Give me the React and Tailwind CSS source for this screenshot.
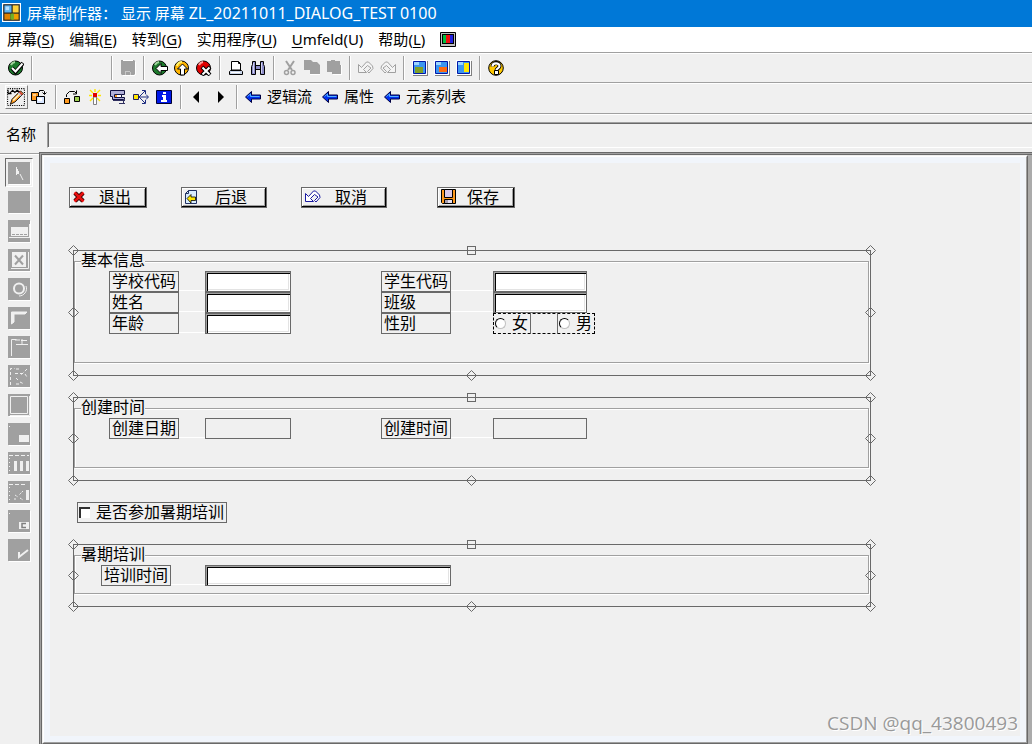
import React, { useState } from 'react';

const Icon = ({ children, className = 'w-4 h-4' }) => (
  <svg viewBox="0 0 16 16" className={`${className} shrink-0 block`} aria-hidden="true">
    {children}
  </svg>
);

const icons = {
  check: (
    <Icon>
      <circle cx="7.5" cy="8" r="7" fill="#1d7a2c" stroke="#000" />
      <path d="M3 5a5 5 0 0 1 4-3" stroke="#9fd49b" strokeWidth="2" fill="none" />
      <path d="M4 8l3.5 4L15 3" stroke="#000" strokeWidth="4" fill="none" />
      <path d="M4 8l3.5 3.5L14.5 3.5" stroke="#fff" strokeWidth="2" fill="none" />
    </Icon>
  ),
  save: (
    <Icon>
      <path d="M1 0h13l1 1v13l-1 1H2l-1-1z" fill="#a0a0a0" />
      <path d="M3 .5h10M15.5 2v13M3 15.500h12" stroke="#fff" fill="none" />
      <path d="M5.500 15v-4M6 11.500h4M10.500 12v3" stroke="#c8c8c8" fill="none" />
    </Icon>
  ),
  back: (
    <Icon>
      <circle cx="7.500" cy="8" r="7" fill="#1d7a2c" stroke="#000" />
      <path d="M3 5a5 5 0 0 1 4-3" stroke="#9fd49b" strokeWidth="2" fill="none" />
      <path d="M4 8.500l5-5v3h6.500v4H9v3z" fill="#fff" stroke="#000" />
    </Icon>
  ),
  up: (
    <Icon>
      <circle cx="7.500" cy="8" r="7" fill="#ffb400" stroke="#000" />
      <path d="M3 6a5 5 0 0 1 5-4" stroke="#fff36b" strokeWidth="2" fill="none" />
      <path d="M8.500 4l5 5h-3v6h-4V9h-3z" fill="#fff" stroke="#000" />
    </Icon>
  ),
  exit: (
    <Icon>
      <circle cx="7.500" cy="8" r="7" fill="#e00000" stroke="#000" />
      <path d="M3 5a5 5 0 0 1 4-3" stroke="#ff9a9a" strokeWidth="2" fill="none" />
      <path d="M6 7l8 8M14 7l-8 8" stroke="#000" strokeWidth="4" />
      <path d="M6.500 7.500l7 7M13.500 7.500l-7 7" stroke="#fff" strokeWidth="2" />
    </Icon>
  ),
  print: (
    <Icon>
      <path d="M3.500 1.500h7l2 2V10h-9z" fill="#fff" stroke="#000" />
      <path d="M10.500 1.500v2h2" fill="none" stroke="#000" />
      <path d="M2.500 10.500h11l1 1v3h-13v-3z" fill="#c8d4e8" stroke="#000" />
      <path d="M3 12.500h9" stroke="#fff" />
    </Icon>
  ),
  find: (
    <Icon>
      <path d="M2.500 1.500h3v4h5v-4h3v3l1 2v8h-4v-5h-5v5h-4v-8l1-2z" fill="#8c8cc8" stroke="#000" />
      <path d="M5.500 5v5M10.500 5v5" stroke="#000" />
      <path d="M3.500 3v10M11.500 3v10" stroke="#d0d0f0" />
    </Icon>
  ),
  cut: (
    <Icon>
      <path d="M4 1l6 9M12 1L6 10" stroke="#a0a0a0" strokeWidth="2" />
      <circle cx="4.500" cy="12.500" r="2" fill="none" stroke="#a0a0a0" strokeWidth="1.500" />
      <circle cx="11" cy="12.500" r="2" fill="none" stroke="#a0a0a0" strokeWidth="1.500" />
    </Icon>
  ),
  copy: (
    <Icon>
      <path d="M0 0h7l2 2h4l3 3v9H6v-4H0z" fill="#a0a0a0" />
      <path d="M6 14.500h10" stroke="#fff" />
    </Icon>
  ),
  paste: (
    <Icon>
      <path d="M1 1h4V0h4v1h5v4h1v9H6v-2H1z" fill="#a0a0a0" />
      <path d="M7 14.500h9M15.500 5v9" stroke="#fff" />
    </Icon>
  ),
  undo: (
    <Icon>
      <path
        d="M.500 4.500v8h8l-3-3 4-4 3.500 2.500-3.500 3.500 1.500 1.500 4-4.500-.500-2.500-4-4H8.500l-5 5.500z"
        fill="#f4f4f4"
        stroke="#a0a0a0"
      />
    </Icon>
  ),
  redo: (
    <Icon>
      <path
        d="M15.500 4.500v8h-8l3-3-4-4L3 8l3.500 3.500L5 13 1 8.500 1.500 6l4-4h2l5 5.500z"
        fill="#f4f4f4"
        stroke="#a0a0a0"
      />
    </Icon>
  ),
  session: (
    <Icon>
      <path d="M1 1h15v15H1z" fill="#808080" />
      <path d="M0 0h15v15H0z" fill="#fff" />
      <path d="M1.500 1.500h12v12h-12z" fill="#3c96f0" stroke="#0018a8" />
      <path d="M2 2h5v3H2z" fill="#9cd4ff" />
      <path d="M3 7h8v6H3z" fill="#7fa028" />
    </Icon>
  ),
  shortcut: (
    <Icon>
      <path d="M1 1h15v15H1z" fill="#808080" />
      <path d="M0 0h15v15H0z" fill="#fff" />
      <path d="M1.500 1.500h12v12h-12z" fill="#3c96f0" stroke="#0018a8" />
      <path d="M2 2h5v3H2z" fill="#9cd4ff" />
      <path d="M5 7h8v5H5z" fill="#ff6a10" />
    </Icon>
  ),
  layout: (
    <Icon>
      <path d="M1 1h15v15H1z" fill="#808080" />
      <path d="M0 0h15v15H0z" fill="#fff" />
      <path d="M1.500 1.500h12v12h-12z" fill="#3c96f0" stroke="#0018a8" />
      <path d="M2 2h5v3H2z" fill="#9cd4ff" />
      <path d="M8 3h5v9H8z" fill="#ffe600" />
    </Icon>
  ),
  help: (
    <Icon>
      <circle cx="8" cy="8" r="7.300" fill="#ffc800" stroke="#000" />
      <path d="M4.500 6.500C4.500 2 11.500 2 11.500 6c0 2.500-3 2.200-3 4.500" stroke="#000" strokeWidth="4" fill="none" />
      <path d="M6.500 10.500h4v4h-4z" fill="#fff" stroke="#000" />
      <path d="M4.500 6.500C4.500 2.500 11.500 2.500 11.500 6c0 2.500-3 2.200-3 4" stroke="#fff" strokeWidth="2.200" fill="none" />
    </Icon>
  ),
  edit: (
    <Icon className="w-[18px] h-[18px]">
      <path d="M.500 .500h15v15H.500z" fill="none" stroke="#000" strokeDasharray="1 1" />
      <path d="M1 2v3h3M2 5l3-3 2 2 2-2 3 2" stroke="#000" fill="none" />
      <path d="M3 14.500l1.500-4.500L12 2.500l2.500 2.500-7.500 7.500z" fill="#ff9a1f" stroke="#000" strokeWidth=".8" />
      <path d="M5.500 11l7-7" stroke="#fff2c0" strokeWidth="1.500" />
      <path d="M11 3.500l2.500 2.500" stroke="#d04040" strokeWidth="1.500" />
      <path d="M10 4.500l2.500 2.500" stroke="#b8d0f0" />
    </Icon>
  ),
  other: (
    <Icon>
      <path d="M.500 3.500h7v8h-7z" fill="#ff9a1f" stroke="#000" />
      <path d="M2 5h3v2H2z" fill="#ffd090" />
      <path d="M5.500 7.500h8v7h-8z" fill="#d8e6ff" stroke="#000" />
      <path d="M7 9h4v3H7z" fill="#fff" />
      <path d="M8.500 3v-1.500h4l1 1V5M11.500 3.500l2 2 2-2" stroke="#000" fill="none" />
    </Icon>
  ),
  activate: (
    <Icon>
      <path d="M.500 9.500h5v5h-5z" fill="#ff9a1f" stroke="#000" />
      <path d="M10.500 7.500h5v5h-5z" fill="#9ccc50" stroke="#000" />
      <path d="M2.500 8V5.500l3-3h5l2 2M12.500 1.500V5H9" stroke="#000" fill="none" />
    </Icon>
  ),
  wand: (
    <Icon>
      <path d="M8 0v3M3 1l3 3M13 1l-3 3M2 6.500h3M11 6.500h3M3 12l3-3M13 12l-3-3" stroke="#ffe600" strokeWidth="1.400" />
      <path d="M6.500 8h3v7.500h-3z" fill="#fff" stroke="#808080" />
      <path d="M6 4h4v4H6z" fill="#e00000" />
    </Icon>
  ),
  where: (
    <Icon>
      <path d="M.500 1.500h14v4h-3v3h3v2H2.500v-3h-2z" fill="#b0b0d8" stroke="#101040" />
      <path d="M4.500 5.500h7v3h-7z" fill="#fff" stroke="#101040" />
      <path d="M5 6h2v2H5z" fill="#ff9a1f" />
      <path d="M3 11.500h12M9 14.500h6M13.500 10v5" fill="none" stroke="#303060" />
    </Icon>
  ),
  hierarchy: (
    <Icon>
      <path d="M.500 5.500h5v5h-5z" fill="#ffe600" stroke="#202060" />
      <path d="M6 8h9M6 8l6-6M6 8l6 6M9 1.500h3.500V5M13 5.500L15.500 8 13 10.500M9 14.500h3.500V11" stroke="#1c2c80" fill="none" />
    </Icon>
  ),
  info: (
    <Icon>
      <path d="M.500 1.500h15v13H.500z" fill="#0018e8" stroke="#000030" />
      <path d="M7 3h3v2H7zM6 6h4v5h1v2H5v-2h2V8H6z" fill="#fff" />
    </Icon>
  ),
  prev: (
    <Icon>
      <path d="M4 8l6-6v12z" fill="#000" />
    </Icon>
  ),
  next: (
    <Icon>
      <path d="M12 8L6 2v12z" fill="#000" />
    </Icon>
  ),
  arrow: (
    <Icon>
      <path d="M.500 8L6.500 2.500V6H15.500v4h-9v3.500z" fill="#0030f0" stroke="#000040" />
      <path d="M2.500 7.500L5.500 5v2.500h9" fill="none" stroke="#50b0ff" />
    </Icon>
  ),
  cancel: (
    <Icon>
      <path d="M2 4l8 8M10 4l-8 8" stroke="#300" strokeWidth="4.500" />
      <path d="M1.500 3.500l9 9M10.500 3.500l-9 9" stroke="#e81010" strokeWidth="2.500" />
    </Icon>
  ),
  previous: (
    <Icon>
      <path d="M.500 4.500l3-3h8v13H.500z" fill="#d8ecff" stroke="#203060" />
      <path d="M.500 4.500h3v-3" fill="none" stroke="#203060" />
      <path d="M2 9.500l4-4V8h4.500v3.500H6V14z" fill="#ffe600" stroke="#000" strokeWidth=".8" />
    </Icon>
  ),
  revert: (
    <Icon>
      <path
        d="M.500 4.500v8h8l-3-3 4-4 3.500 2.500-3.500 3.500 1.500 1.500 4-4.500-.500-2.500-4-4H8.500l-5 5.500z"
        fill="#fff"
        stroke="#1818a0"
      />
    </Icon>
  ),
  disk: (
    <Icon>
      <path d="M.500 .500h14v14h-13l-1-1z" fill="#ff9a1f" stroke="#000" />
      <path d="M3.500 .500h8v8h-8z" fill="#d8c8e8" stroke="#000" />
      <path d="M3.500 10.500h8v4h-8z" fill="#e8e0f0" stroke="#000" />
      <path d="M4 11h3v3H4z" fill="#a8a0b0" />
    </Icon>
  ),
};

const palette = [
  { name: '选择', art: <path d="M8.500 5v8M9.500 7v5M10.500 9v3M12 12l3 6" /> },
  { name: '文本字段', art: null },
  {
    name: '输入/输出字段',
    art: (
      <>
        <path d="M3 7h17v9H3z" fill="#f0f0f0" stroke="none" />
        <path d="M4 14.500h16" stroke="#a0a0a0" strokeDasharray="3 1" />
        <path d="M1 17.500h21M21.500 4v14" />
      </>
    ),
  },
  {
    name: '复选框',
    art: (
      <>
        <path d="M4 3h14v15H4z" fill="#f0f0f0" stroke="none" />
        <path d="M7 6.500l8 9M15 6.500l-8 9" stroke="#a0a0a0" strokeWidth="2" />
        <path d="M3 19.500h17.500V3" />
      </>
    ),
  },
  {
    name: '单选按钮',
    art: (
      <>
        <circle cx="11" cy="10.500" r="5" strokeWidth="2" />
        <path d="M18 8c2 5-2 10-7 10" />
      </>
    ),
  },
  { name: '按钮', art: <path d="M3.500 17V5H19l-2 2H6v8z" fill="#f0f0f0" /> },
  { name: '标签条', art: <path d="M3.500 20V3.500h5M7 4h5M14 3v6M8 8.500h12M13 4.500h6" /> },
  {
    name: '标签条向导',
    art: <path d="M2.500 20V3.500h4M8 4h5M7 8.500h10M19 4l-7 7M8 13l2 2M8 19h3M12 17l4 2M17 9l2 3" strokeDasharray="3 2" />,
  },
  { name: '框', art: <path d="M2.500 2.500h17v17h-17zM21.500 2v19.500H2" /> },
  {
    name: '子屏幕区域',
    art: (
      <>
        <path d="M11 12h10v7H11z" fill="#f0f0f0" stroke="none" />
        <path d="M1 3.500h1" />
      </>
    ),
  },
  {
    name: '表控件',
    art: (
      <>
        <path d="M6 9h3v10H6zM12 9h3v10h-3zM18 9h3v10h-3z" fill="#f0f0f0" stroke="none" />
        <path d="M1 3.500h20" strokeDasharray="4 2" />
        <path d="M1.500 6v14" strokeDasharray="1 3" />
      </>
    ),
  },
  {
    name: '表控件向导',
    art: (
      <>
        <path d="M18 9h3v10h-3z" fill="#f0f0f0" stroke="none" />
        <path d="M1 3.500h16" strokeDasharray="4 2" />
        <path d="M1.500 6v14" strokeDasharray="1 3" />
        <path d="M15 10l-4 4M7 14l3 2M6 18h3M12 17l3 2" strokeDasharray="2 1" />
      </>
    ),
  },
  {
    name: '定制控件',
    art: (
      <>
        <path d="M11 12h10v7H11z" fill="#f0f0f0" stroke="none" />
        <path d="M18 13.500h-4v4h4" stroke="#808080" strokeWidth="1.500" />
        <path d="M1 3.500h1" />
      </>
    ),
  },
  { name: '状态图标', art: <path d="M11 13v5l9-7" strokeWidth="2" /> },
];

const Separator = () => <span className="mx-1 h-6 w-0.5 shrink-0 border-l border-[#a0a0a0] bg-white" />;

const ToolButton = ({ icon, label, wide, pressed }) => (
  <button
    title={label}
    aria-label={label}
    className={`flex h-6 shrink-0 items-center justify-center ${wide ? 'w-[23px] pr-px' : 'w-[22px]'} ${
      pressed ? 'border border-t-white border-l-white border-r-[#808080] border-b-[#808080]' : ''
    }`}
  >
    {icons[icon]}
  </button>
);

const LinkButton = ({ children }) => (
  <button className="flex h-6 shrink-0 items-center gap-1.5 pl-[3px] pr-[7px] text-[15px]">
    {icons.arrow}
    {children}
  </button>
);

const MenuItem = ({ text, hotkey, before = '(', after = ')' }) => (
  <button className="shrink-0 whitespace-nowrap">
    {text}
    {before}
    <span className="underline underline-offset-2">{hotkey}</span>
    {after}
  </button>
);

const FormButton = ({ icon, className, children }) => (
  <button className={`h-[21px] border border-[#696969] ${className}`}>
    <span className="flex h-[19px] items-center border-b border-r border-black bg-[#f0f0f0] pl-[3px] pr-1 text-base leading-[18px] shadow-[inset_1px_1px_0_#fff,inset_-1px_-1px_0_#a0a0a0]">
      {icons[icon]}
      <span className="flex-1 pt-px text-center">{children}</span>
    </span>
  </button>
);

const Handle = ({ className }) => (
  <svg viewBox="0 0 11 11" className={`absolute h-[11px] w-[11px] ${className}`} aria-hidden="true">
    <path d="M5.500 .500l5 5-5 5-5-5z" fill="none" stroke="#696969" />
  </svg>
);

// Selected group box: outer selection line with its handles, inner captioned frame
const Group = ({ title, className, children }) => (
  <div className="relative ml-1 w-full max-w-[798px] border border-[#696969] pb-3">
    <fieldset
      className={`mr-px min-w-0 border border-[#a0a0a0] px-1.5 shadow-[1px_1px_0_#fff,inset_1px_1px_0_#fff] ${className}`}
    >
      <legend className="relative h-5 bg-[#f0f0f0] text-base leading-5">{title}</legend>
      {children}
    </fieldset>
    <Handle className="-left-1.5 -top-1.5" />
    <Handle className="-right-1.5 -top-1.5" />
    <Handle className="-left-1.5 -bottom-1.5" />
    <Handle className="-right-1.5 -bottom-1.5" />
    <Handle className="-left-1.5 top-1/2 -translate-y-1.5" />
    <Handle className="-right-1.5 top-1/2 -translate-y-1.5" />
    <Handle className="-bottom-1.5 left-1/2 -translate-x-1.5" />
    <span className="absolute -top-[5px] left-1/2 h-[9px] w-[9px] -translate-x-[5px] border border-[#696969]" />
  </div>
);

const Label = ({ htmlFor, children }) => (
  <label
    htmlFor={htmlFor}
    className="block h-[21px] w-[70px] shrink-0 whitespace-nowrap border border-[#696969] pl-0.5 text-base leading-5"
  >
    {children}
  </label>
);

const Connector = ({ className }) => <span className={`mb-px h-px self-end bg-white ${className}`} />;

const Field = ({ id, disabled, className }) =>
  disabled ? (
    <input id={id} disabled className={`block h-[21px] border border-[#696969] ${className}`} />
  ) : (
    <span className={`block h-[21px] border border-[#696969] ${className}`}>
      <span className="block h-[19px] border-l border-t border-[#a0a0a0]">
        <input
          id={id}
          className="block h-[18px] w-full border-l border-t border-black bg-white px-1 text-sm shadow-[inset_-1px_-1px_0_#fff,inset_-2px_-2px_0_#e3e3e3] outline-none"
        />
      </span>
    </span>
  );

const Row = ({ left, right, gender, disabled }) => (
  <div className="ml-7 flex h-[21px]">
    <Label htmlFor={left.id}>{left.label}</Label>
    <Connector className="w-[26px]" />
    <Field id={left.id} disabled={disabled} className="w-[86px]" />
    <span className="w-[90px]" />
    <Label htmlFor={right.id}>{right.label}</Label>
    {gender ? <span className="w-[42px]" /> : <Connector className="w-[42px]" />}
    {gender || <Field id={right.id} disabled={disabled} className="w-[94px]" />}
  </div>
);

const Radio = ({ value, current, onChange, className }) => (
  <label className={`flex h-[19px] w-[37px] items-center gap-1.5 border-[#696969] pl-px text-base leading-5 ${className}`}>
    <input
      type="radio"
      name="gender"
      checked={current === value}
      onChange={() => onChange(value)}
      className="h-[11px] w-[11px] shrink-0 appearance-none rounded-full border border-b-[#c0c0c0] border-l-black border-r-[#c0c0c0] border-t-black bg-white checked:bg-black"
    />
    {value}
  </label>
);

const App = () => {
  const [gender, setGender] = useState('');
  const [training, setTraining] = useState(false);

  return (
    <div className="flex min-h-screen flex-col overflow-hidden bg-[#f0f0f0] font-['Liberation_Sans','Noto_Sans_CJK_SC',sans-serif] text-black">
      <header className="flex h-[27px] items-center gap-1.5 bg-[#0078d7] pb-0.5 pl-0.5 font-['Noto_Sans','Noto_Sans_CJK_SC',sans-serif] text-[15px] text-white">
        <Icon className="w-[19px] h-[19px]">
          <path d="M0 0h16v16H0z" fill="#fff" />
          <path d="M1 1h14v14H1z" fill="#202020" />
          <path d="M2 2h6v6H2z" fill="#5cb4f4" />
          <path d="M3 3h3v3H3z" fill="#b8e0ff" />
          <path d="M9 2h5v6H9z" fill="#ffd23c" />
          <path d="M8 9h6v5H8z" fill="#f0a000" />
          <path d="M2 9h5v5H2z" fill="#e08000" />
          <path d="M7 9h3v5H7z" fill="#6fae28" />
        </Icon>
        <h1 className="whitespace-pre">
          屏幕制作器： 显示 屏幕 <span className="text-base">ZL_20211011_DIALOG_TEST 0100</span>
        </h1>
      </header>

      <nav className="flex h-[25px] items-center gap-[15px] bg-white pl-[7px] font-['Noto_Sans','Noto_Sans_CJK_SC',sans-serif] text-[15px]">
        <MenuItem text="屏幕" hotkey="S" />
        <MenuItem text="编辑" hotkey="E" />
        <MenuItem text="转到" hotkey="G" />
        <MenuItem text="实用程序" hotkey="U" />
        <MenuItem text="" before="" hotkey="U" after="mfeld(U)" />
        <MenuItem text="帮助" hotkey="L" />
        <button aria-label="本地布局">
          <Icon>
            <path d="M.500 .500h15v14H.500z" fill="#c0c0c0" stroke="#000" />
            <path d="M2 2h12v10H2z" fill="#000" />
            <path d="M3 3h3v8H3z" fill="#00c040" />
            <path d="M6 3h4v8H6z" fill="#f01010" />
            <path d="M10 3h3v8h-3z" fill="#2020e0" />
          </Icon>
        </button>
      </nav>

      <div className="flex h-[30px] items-center border-t border-[#a0a0a0] pl-[5px] shadow-[inset_0_1px_0_#fff]">
        <ToolButton icon="check" label="回车" />
        <Separator />
        <input aria-label="命令" className="h-5 w-[70px] bg-transparent text-sm outline-none" />
        <Separator />
        <ToolButton icon="save" label="保存" />
        <Separator />
        <ToolButton icon="back" label="返回" />
        <ToolButton icon="up" label="退出" />
        <ToolButton icon="exit" label="取消" />
        <Separator />
        <ToolButton icon="print" label="打印" />
        <ToolButton icon="find" label="查找" />
        <Separator />
        <ToolButton icon="cut" label="剪切" />
        <ToolButton icon="copy" label="复制" />
        <ToolButton icon="paste" label="粘贴" />
        <Separator />
        <ToolButton icon="undo" label="撤销" />
        <ToolButton icon="redo" label="重做" />
        <Separator />
        <ToolButton icon="session" label="新建会话" />
        <ToolButton icon="shortcut" label="快捷方式" />
        <ToolButton icon="layout" label="定制布局" />
        <Separator />
        <ToolButton icon="help" label="帮助" />
      </div>

      <div className="flex h-[31px] items-center border-t border-[#a0a0a0] pb-0.5 pl-[5px] shadow-[inset_0_1px_0_#fff]">
        <ToolButton wide pressed icon="edit" label="显示/更改" />
        <ToolButton wide icon="other" label="其他对象" />
        <Separator />
        <ToolButton wide icon="activate" label="激活" />
        <ToolButton wide icon="wand" label="检查" />
        <ToolButton wide icon="where" label="使用位置" />
        <ToolButton wide icon="hierarchy" label="层次" />
        <ToolButton wide icon="info" label="信息" />
        <Separator />
        <ToolButton wide icon="prev" label="上一个" />
        <ToolButton wide icon="next" label="下一个" />
        <Separator />
        <LinkButton>逻辑流</LinkButton>
        <LinkButton>属性</LinkButton>
        <LinkButton>元素列表</LinkButton>
      </div>

      <div className="flex h-[39px] items-center border-t border-[#a0a0a0] pl-1.5 pt-1 shadow-[inset_0_1px_0_#fff]">
        <label htmlFor="name" className="w-[41px] shrink-0 text-[15px]">
          名称
        </label>
        <input
          id="name"
          className="h-[26px] min-w-0 flex-1 border-b border-l border-t border-b-white border-l-[#a0a0a0] border-t-[#a0a0a0] bg-transparent px-1 shadow-[inset_1px_1px_0_#696969] outline-none"
        />
      </div>

      <div className="flex flex-1">
        <aside className="mt-px flex w-[39px] shrink-0 flex-col border-t border-[#a0a0a0] pl-[5px] pt-1 shadow-[inset_0_1px_0_#fff]">
          {palette.map((tool, index) => (
            <button
              key={tool.name}
              title={tool.name}
              aria-label={tool.name}
              className={`flex h-[29px] w-7 items-center justify-center border ${
                index === 0
                  ? 'border-b-white border-l-[#696969] border-r-white border-t-[#696969]'
                  : 'border-transparent'
              }`}
            >
              <svg
                viewBox="0 0 22 22"
                className="h-[22px] w-[22px] overflow-visible"
                fill="none"
                stroke="#f0f0f0"
                aria-hidden="true"
              >
                <path d="M1 1h22v22H1z" fill="#fff" stroke="none" />
                <path d="M0 0h22v22H0z" fill="#a0a0a0" stroke="none" />
                {tool.art}
              </svg>
            </button>
          ))}
        </aside>

        <main className="flex min-w-0 flex-1 border-l border-t border-[#696969]">
          <div className="flex min-w-0 flex-1 border-l border-t border-[#a0a0a0]">
            <div className="flex min-w-0 flex-1 border-l border-t border-[#696969] bg-[#ababab] pr-1">
              <div className="flex min-w-0 flex-1 border border-b-[#696969] border-l-[#f0f0f0] border-r-[#696969] border-t-[#f0f0f0]">
                <div className="flex min-w-0 flex-1 border border-b-[#a0a0a0] border-l-white border-r-[#a0a0a0] border-t-white bg-[#f1f5fb] p-1.5">
                  <form
                    onSubmit={e => e.preventDefault()}
                    className="relative flex min-w-0 flex-1 flex-col items-start bg-[#f0f0f0] pl-[19px] pt-6"
                  >
                    <div className="mb-[42px] flex gap-[34px]">
                      <FormButton icon="cancel" className="w-[78px]">退出</FormButton>
                      <FormButton icon="previous" className="w-[86px]">后退</FormButton>
                      <FormButton icon="revert" className="w-[86px]">取消</FormButton>
                      <FormButton icon="disk" className="ml-4 w-[78px]">保存</FormButton>
                    </div>

                    <div className="flex w-full flex-col items-start gap-[21px]">
                      <Group title="基本信息" className="pb-7">
                        <Row left={{ id: 'school', label: '学校代码' }} right={{ id: 'student', label: '学生代码' }} />
                        <Row left={{ id: 'fullname', label: '姓名' }} right={{ id: 'class', label: '班级' }} />
                        <Row
                          left={{ id: 'age', label: '年龄' }}
                          right={{ label: '性别' }}
                          gender={
                            <div
                              role="radiogroup"
                              aria-label="性别"
                              className="flex w-[102px] justify-between border border-dashed border-black"
                            >
                              <Radio value="女" current={gender} onChange={setGender} className="border-r" />
                              <Radio value="男" current={gender} onChange={setGender} className="border-l" />
                            </div>
                          }
                        />
                      </Group>

                      <Group title="创建时间" className="pb-7">
                        <Row
                          disabled
                          left={{ id: 'createDate', label: '创建日期' }}
                          right={{ id: 'createTime', label: '创建时间' }}
                        />
                      </Group>

                      <label className="ml-2 flex h-[21px] w-[150px] items-center gap-1.5 whitespace-nowrap border border-[#696969] pl-px text-base leading-5">
                        <input
                          type="checkbox"
                          checked={training}
                          onChange={e => setTraining(e.target.checked)}
                          className="h-[11px] w-[11px] shrink-0 appearance-none border-l-2 border-t-2 border-[#303030] bg-white checked:bg-black"
                        />
                        是否参加暑期培训
                      </label>

                      <Group title="暑期培训" className="pb-[7px]">
                        <div className="ml-5 flex h-[21px]">
                          <Label htmlFor="trainTime">培训时间</Label>
                          <Connector className="w-[34px]" />
                          <Field id="trainTime" className="w-[246px]" />
                        </div>
                      </Group>
                    </div>

                    <p className="absolute bottom-0 right-0.5 font-['Open_Sans',sans-serif] text-[19px] leading-[26px] text-[#999] [text-shadow:1px_1px_0_#fff]">
                      CSDN @qq_43800493
                    </p>
                  </form>
                </div>
              </div>
            </div>
          </div>
        </main>
      </div>
    </div>
  );
};

export default App;
